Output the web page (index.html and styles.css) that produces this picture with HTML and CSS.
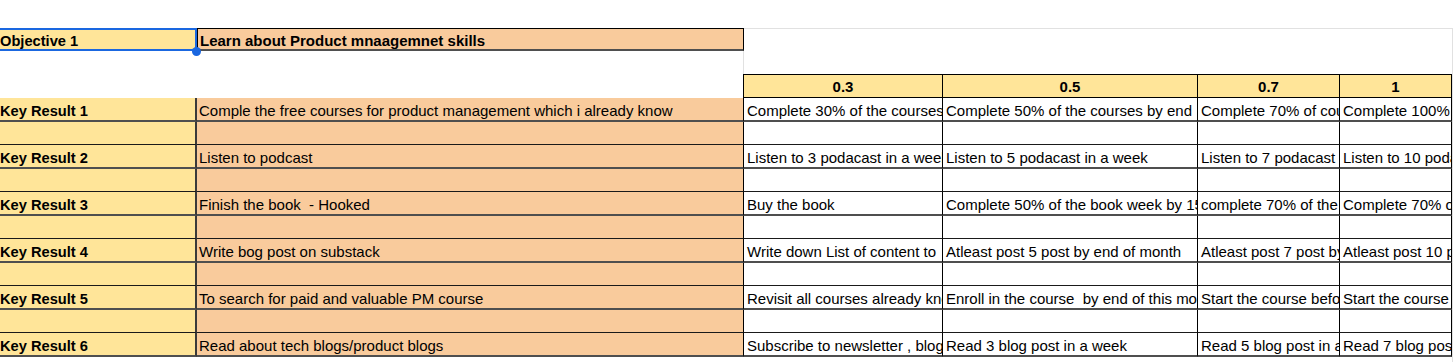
FILE: index.html
```html
<!DOCTYPE html>
<html lang="en">
<head>
<meta charset="utf-8">
<title>OKR sheet</title>
<link rel="stylesheet" href="styles.css">
</head>
<body>
<div class="sheet">
  <div class="edge"></div>
  <div class="top-space"></div>

  <div class="cell obj-a">Objective 1<span class="handle"></span></div>
  <div class="cell obj-b">Learn about Product mnaagemnet skills</div>
  <div class="empty-grid"></div>

  <div class="blank"></div>
  <div class="blank gap-b"></div>

  <div class="blank"></div>
  <div class="blank hd-b"></div>
  <div class="cell hd">0.3</div>
  <div class="cell hd">0.5</div>
  <div class="cell hd">0.7</div>
  <div class="cell hd">1</div>

  <div class="cell ca tr">Key Result 1</div>
  <div class="cell cb tr">Comple the free courses for product management which i already know</div>
  <div class="cell cv tr">Complete 30% of the courses by end of week</div>
  <div class="cell cv tr">Complete 50% of the courses by end</div>
  <div class="cell cv tr">Complete 70% of courses</div>
  <div class="cell cv tr">Complete 100% of courses</div>

  <div class="cell ca br"></div>
  <div class="cell cb br"></div>
  <div class="cell cv br"></div>
  <div class="cell cv br"></div>
  <div class="cell cv br"></div>
  <div class="cell cv br"></div>

  <div class="cell ca tr">Key Result 2</div>
  <div class="cell cb tr">Listen to podcast</div>
  <div class="cell cv tr">Listen to 3 podacast in a week</div>
  <div class="cell cv tr">Listen to 5 podacast in a week</div>
  <div class="cell cv tr">Listen to 7 podacast</div>
  <div class="cell cv tr">Listen to 10 podacast in a week</div>

  <div class="cell ca br"></div>
  <div class="cell cb br"></div>
  <div class="cell cv br"></div>
  <div class="cell cv br"></div>
  <div class="cell cv br"></div>
  <div class="cell cv br"></div>

  <div class="cell ca tr">Key Result 3</div>
  <div class="cell cb tr">Finish the book  - Hooked</div>
  <div class="cell cv tr">Buy the book</div>
  <div class="cell cv tr">Complete 50% of the book week by 15th</div>
  <div class="cell cv tr">complete 70% of the book</div>
  <div class="cell cv tr">Complete 70% of the book</div>

  <div class="cell ca br"></div>
  <div class="cell cb br"></div>
  <div class="cell cv br"></div>
  <div class="cell cv br"></div>
  <div class="cell cv br"></div>
  <div class="cell cv br"></div>

  <div class="cell ca tr">Key Result 4</div>
  <div class="cell cb tr">Write bog post on substack</div>
  <div class="cell cv tr">Write down List of content to</div>
  <div class="cell cv tr">Atleast post 5 post by end of month</div>
  <div class="cell cv tr">Atleast post 7 post by end of month</div>
  <div class="cell cv tr">Atleast post 10 post by end of month</div>

  <div class="cell ca br"></div>
  <div class="cell cb br"></div>
  <div class="cell cv br"></div>
  <div class="cell cv br"></div>
  <div class="cell cv br"></div>
  <div class="cell cv br"></div>

  <div class="cell ca tr">Key Result 5</div>
  <div class="cell cb tr">To search for paid and valuable PM course</div>
  <div class="cell cv tr">Revisit all courses already known</div>
  <div class="cell cv tr">Enroll in the course  by end of this month</div>
  <div class="cell cv tr">Start the course before end of month</div>
  <div class="cell cv tr">Start the course and finish</div>

  <div class="cell ca br"></div>
  <div class="cell cb br"></div>
  <div class="cell cv br"></div>
  <div class="cell cv br"></div>
  <div class="cell cv br"></div>
  <div class="cell cv br"></div>

  <div class="cell ca tr">Key Result 6</div>
  <div class="cell cb tr">Read about tech blogs/product blogs</div>
  <div class="cell cv tr">Subscribe to newsletter , blogs</div>
  <div class="cell cv tr">Read 3 blog post in a week</div>
  <div class="cell cv tr">Read 5 blog post in a week</div>
  <div class="cell cv tr">Read 7 blog post in a week</div>
</div>
</body>
</html>
```

FILE: styles.css
```css
html, body {
  margin: 0;
  padding: 0;
  background: #ffffff;
}

.sheet {
  display: grid;
  grid-template-columns: 197px 547px 199px 255px 142px 112px 1fr;
  grid-template-rows: 28px 23px 23px 24px repeat(5, 24px 23px) 24px 1fr;
  height: 362px;
  font-family: "Liberation Sans", Arial, sans-serif;
  font-size: 15px;
  color: #000000;
}

.top-space {
  grid-column: 1 / -1;
}

.edge {
  grid-column: 7;
  grid-row: 2 / -1;
  border-left: 1px solid #e1e1e1;
}

.empty-grid {
  grid-column: span 4;
  grid-row: span 2;
  border-top: 1px solid #e1e1e1;
}

.blank {
  box-sizing: border-box;
}

.gap-b {
  border-right: 1px solid #e1e1e1;
}

.hd-b {
  border-right: 1px solid #000000;
}

.cell {
  box-sizing: border-box;
  display: flex;
  align-items: flex-end;
  overflow: hidden;
  white-space: pre;
  line-height: normal;
  padding: 0 0 1px 3px;
}

.obj-a {
  position: relative;
  overflow: visible;
  background: #ffe599;
  font-weight: bold;
  font-size: 14.67px;
  padding: 0;
  border-top: 2px solid #1a67e0;
  border-bottom: 2px solid #1a67e0;
  border-right: 2px solid #1a67e0;
}

.handle {
  position: absolute;
  right: -5.5px;
  bottom: -6.5px;
  width: 9px;
  height: 9px;
  border-radius: 50%;
  background: #1a67e0;
  z-index: 2;
}

.obj-b {
  background: #f9cb9c;
  font-weight: bold;
  padding: 0 0 0 2px;
  border-top: 1px solid #000000;
  border-bottom: 2px solid #4f4f4f;
  border-left: 1px solid #000000;
  border-right: 1px solid #000000;
}

.hd {
  background: #ffe599;
  font-weight: bold;
  justify-content: center;
  padding: 0 0 2px 0;
  border-top: 1px solid #000000;
  border-bottom: 1px solid #000000;
  border-right: 1px solid #000000;
}

.ca {
  background: #ffe599;
  font-weight: bold;
  font-size: 14.67px;
  padding-left: 0;
  border-right: 2px solid #3a3a3a;
}

.cb {
  background: #f9cb9c;
  padding-left: 2px;
  border-right: 1px solid #000000;
}

.cv {
  background: #ffffff;
  border-right: 1px solid #000000;
}

.tr {
  border-bottom: 2px solid #4f4f4f;
}

.br {
  border-bottom: 1px solid #1a1a1a;
}
```
